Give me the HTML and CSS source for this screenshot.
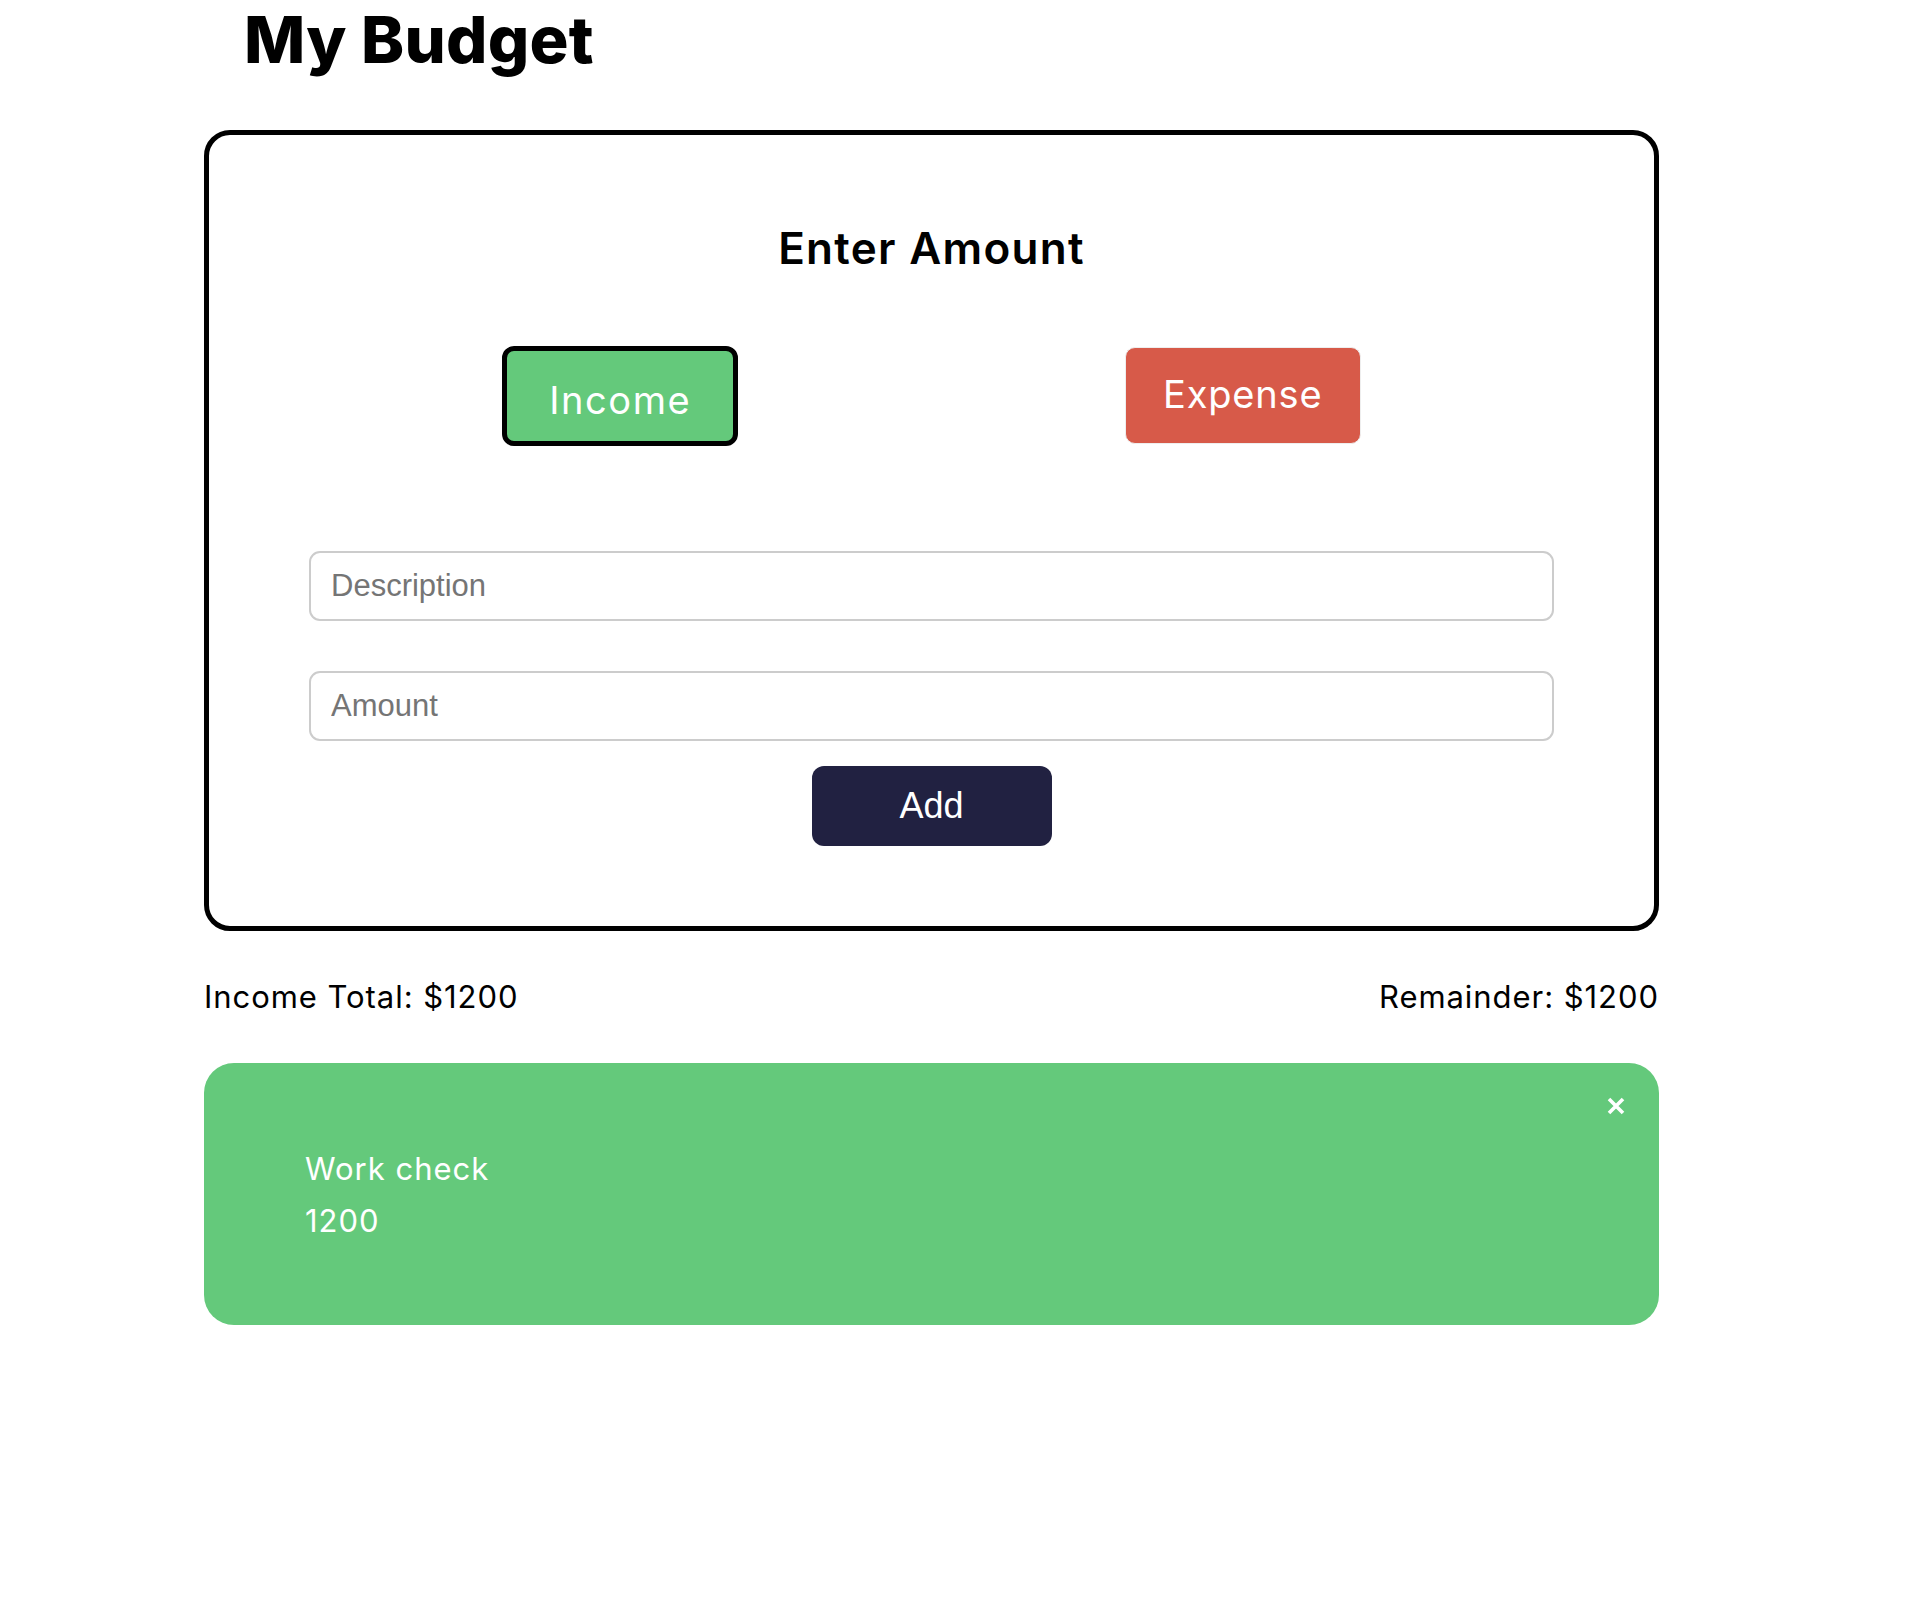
FILE: index.html
```html
<!DOCTYPE html>
<html lang="en">
<head>
<meta charset="utf-8">
<title>My Budget</title>
<link rel="stylesheet" href="styles.css">
</head>
<body>
<main class="app">
  <h1 class="title">My Budget</h1>
  <section class="card">
    <h2 class="card-title">Enter Amount</h2>
    <div class="type-row">
      <button class="type-btn type-income is-active">Income</button>
      <button class="type-btn type-expense">Expense</button>
    </div>
    <div class="fields">
      <input class="field" type="text" placeholder="Description">
      <input class="field" type="text" placeholder="Amount">
      <button class="add-btn">Add</button>
    </div>
  </section>
  <div class="totals">
    <span class="total">Income Total: $1200</span>
    <span class="total">Remainder: $1200</span>
  </div>
  <ul class="entries">
    <li class="entry entry-income">
      <span class="entry-desc">Work check</span>
      <span class="entry-amount">1200</span>
      <button class="entry-close" aria-label="Remove">
        <svg viewBox="0 0 18 18" width="18" height="18"><path d="M2 2 L16 16 M16 2 L2 16" stroke="#fff" stroke-width="3.6" stroke-linecap="butt" fill="none"/></svg>
      </button>
    </li>
  </ul>
</main>
</body>
</html>
```

FILE: styles.css
```css
* { box-sizing: border-box; }

body {
  margin: 0;
  background: #fff;
  color: #000;
  font-family: "Inter", "Open Sans", sans-serif;
}

.app {
  width: 1455px;
  margin-left: 204px;
}

.title {
  margin: 0;
  padding-left: 40px;
  font-size: 65px;
  font-weight: 800;
  line-height: 80px;
  letter-spacing: 0.2px;
}

.card {
  margin-top: 50px;
  border: 5px solid #000;
  border-radius: 26px;
  padding: 87px 100px 80px;
}

.card-title {
  margin: 0;
  text-align: center;
  font-size: 44px;
  font-weight: 600;
  line-height: 53px;
  letter-spacing: 1.3px;
}

.type-row {
  display: flex;
  justify-content: space-around;
  align-items: flex-start;
  margin-top: 71px;
}

.type-btn {
  width: 236px;
  font-family: "Inter", "Open Sans", sans-serif;
  font-size: 38px;
  font-weight: 400;
  letter-spacing: 0.8px;
  color: #fff;
  cursor: pointer;
}

.type-income {
  height: 100px;
  background: #64c97b;
  border: 5px solid #000;
  border-radius: 12px;
  padding: 8px 0 0;
  letter-spacing: 1.6px;
}

.type-expense {
  height: 97px;
  margin-top: 1px;
  background: #d75a49;
  border: 1px solid #eee;
  border-radius: 10px;
  padding: 0 0 4px;
}

.fields {
  display: flex;
  flex-direction: column;
  align-items: center;
  margin-top: 105px;
}

.field {
  width: 100%;
  height: 70px;
  border: 2px solid #ccc;
  border-radius: 11px;
  padding: 0 20px;
  font-family: "Liberation Sans", Arial, sans-serif;
  font-size: 31px;
  color: #333;
  background: #fff;
}

.field + .field { margin-top: 50px; }

.field::placeholder { color: #757575; }

.add-btn {
  margin-top: 25px;
  width: 240px;
  height: 80px;
  border: none;
  border-radius: 12px;
  background: #212141;
  color: #fff;
  font-family: "Liberation Sans", Arial, sans-serif;
  font-size: 36px;
  cursor: pointer;
}

.totals {
  display: flex;
  justify-content: space-between;
  margin-top: 46px;
  font-size: 31px;
  line-height: 40px;
  letter-spacing: 0.95px;
}

.entries {
  list-style: none;
  margin: 46px 0 0;
  padding: 0;
}

.entry {
  position: relative;
  display: flex;
  flex-direction: column;
  height: 262px;
  padding: 80px 101px 0;
  border-radius: 30px;
  color: #fff;
  font-size: 31px;
  line-height: 52px;
  letter-spacing: 1px;
}

.entry-income { background: #64c97b; }

.entry-close {
  position: absolute;
  top: 34px;
  right: 34px;
  width: 18px;
  height: 18px;
  padding: 0;
  border: none;
  background: none;
  cursor: pointer;
  display: flex;
}
```
